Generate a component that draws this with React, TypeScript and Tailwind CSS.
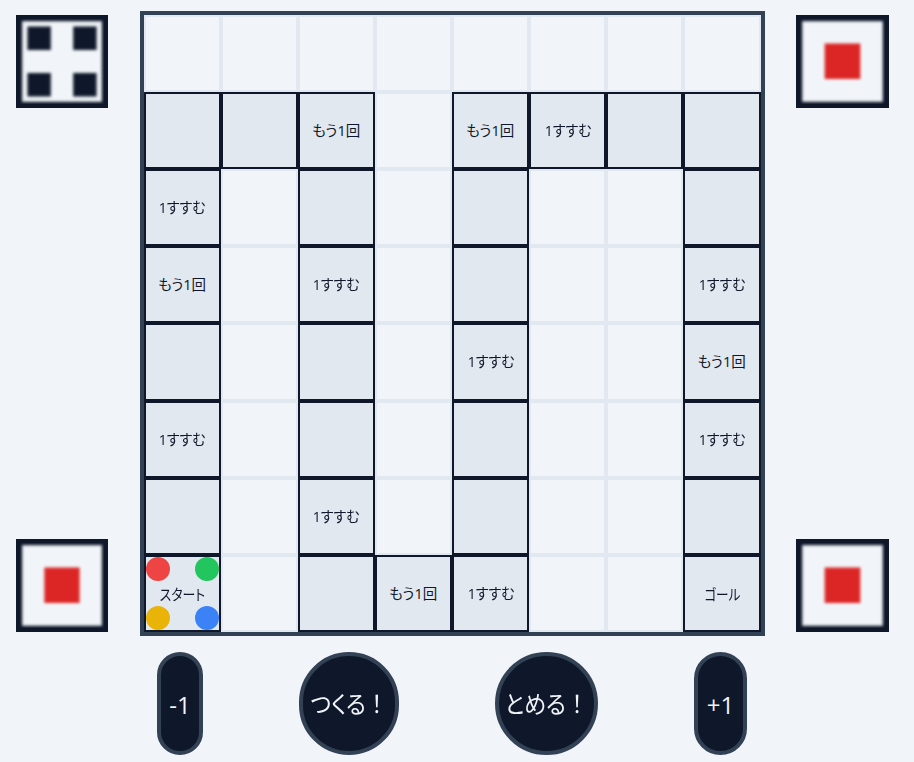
import React from "react";

const labelFont =
  "font-['Open_Sans','Noto_Sans_CJK_JP',sans-serif] [font-feature-settings:'palt']";

// One string per row: "." is an empty square, "_" a plain path square, a letter a labelled one.
const rows = ["........", "__M.MS__", "S._._.._", "M.S._..S", "_._.S..M", "S._._..S", "_.S._.._", "B._MS..G"];

const labels: Record<string, string> = {
  M: "もう1回",
  S: "1すすむ",
  B: "スタート",
  G: "ゴール",
};

const labelShape: Record<string, string> = {
  M: "text-[14.5px] right-[0.5px]",
  S: "text-[14.5px] scale-x-[0.97]",
  B: "text-[15px] scale-x-[0.86]",
  G: "text-[15px] scale-x-[0.84]",
};

function Tokens() {
  return (
    <div className="absolute inset-0 grid grid-cols-2 content-between">
      <span className="size-6 rounded-full bg-[#ef4444]" />
      <span className="size-6 justify-self-end rounded-full bg-[#22c55e]" />
      <span className="size-6 rounded-full bg-[#eab308]" />
      <span className="size-6 justify-self-end rounded-full bg-[#3b82f6]" />
    </div>
  );
}

function Square({ kind }: { kind: string }) {
  if (kind === ".") {
    return <div className="border-2 border-[#e2e8f0]" />;
  }
  return (
    <div className="relative flex items-center justify-center border-2 border-[#0f172a] bg-[#e2e8f0]">
      {kind === "B" && <Tokens />}
      <span
        className={`relative pt-px whitespace-nowrap leading-6 text-[#0f172a] ${labelFont} ${labelShape[kind] ?? ""}`}
      >
        {labels[kind]}
      </span>
    </div>
  );
}

function Die({ value, className }: { value: 1 | 4; className: string }) {
  const pips = [
    [11.5, 11.5],
    [57.5, 11.5],
    [11.5, 58],
    [57.5, 58],
  ];
  return (
    <div className={`h-[93px] overflow-hidden border-4 border-[#0f172a] ${className}`}>
      <svg className="-m-1 block h-[93px] w-[calc(100%+8px)] max-w-none" viewBox="0 0 92.5 93" preserveAspectRatio="none">
        <defs>
          <filter id="soft" x="-20%" y="-20%" width="140%" height="140%" colorInterpolationFilters="sRGB">
            <feGaussianBlur stdDeviation="1.6" />
          </filter>
        </defs>
        <rect x="0" y="0" width="92.5" height="93" fill="none" stroke="#0f172a" strokeWidth="12.4" filter="url(#soft)" />
        {value === 1 ? (
          <rect x="28.5" y="28.5" width="35.5" height="35.5" fill="#dc2626" filter="url(#soft)" />
        ) : (
          pips.map(([x, y]) => (
            <rect key={`${x}-${y}`} x={x} y={y} width="23.5" height="23.5" fill="#0f172a" filter="url(#soft)" />
          ))
        )}
      </svg>
    </div>
  );
}

function RoundButton({ children, className }: { children: React.ReactNode; className: string }) {
  return (
    <button
      className={`flex h-[103px] shrink-0 items-center justify-center rounded-full border-4 border-[#334155] bg-[#0f172a] whitespace-nowrap text-[#f1f5f9] ${labelFont} ${className}`}
    >
      {children}
    </button>
  );
}

function Exclaimed({ text }: { text: string }) {
  return (
    <span className="flex scale-x-[0.94]">
      {text}
      <span className="[font-feature-settings:'palt'_0]">！</span>
    </span>
  );
}

export default function App() {
  return (
    <main className="h-[762px] w-[914px] overflow-hidden bg-[#f1f5f9] pt-[11px]">
      <div className="flex h-[625px] pl-4">
        <div className="flex w-[124px] flex-col justify-between py-1">
          <Die value={4} className="w-[92px]" />
          <Die value={1} className="w-[92px]" />
        </div>
        <div className="grid w-[625px] grid-cols-[repeat(7,77.05px)_1fr] grid-rows-[repeat(7,77.11px)_1fr] border-4 border-[#334155]">
          {rows.flatMap((row, y) => row.split("").map((kind, x) => <Square key={`${x}-${y}`} kind={kind} />))}
        </div>
        <div className="ml-[31px] flex flex-col justify-between py-1">
          <Die value={1} className="w-[93px]" />
          <Die value={1} className="w-[93px]" />
        </div>
      </div>
      <div className="mt-4 flex pl-[157px]">
        <RoundButton className="w-[46px] pt-[3px] text-[24px]">-1</RoundButton>
        <RoundButton className="ml-24 w-[100px] pt-[3px] text-[23.5px]">
          <Exclaimed text="つくる" />
        </RoundButton>
        <RoundButton className="ml-24 w-[103px] pt-[3px] text-[23.5px]">
          <Exclaimed text="とめる" />
        </RoundButton>
        <RoundButton className="ml-24 w-[53px] pt-[3px] text-[24px]">+1</RoundButton>
      </div>
    </main>
  );
}
